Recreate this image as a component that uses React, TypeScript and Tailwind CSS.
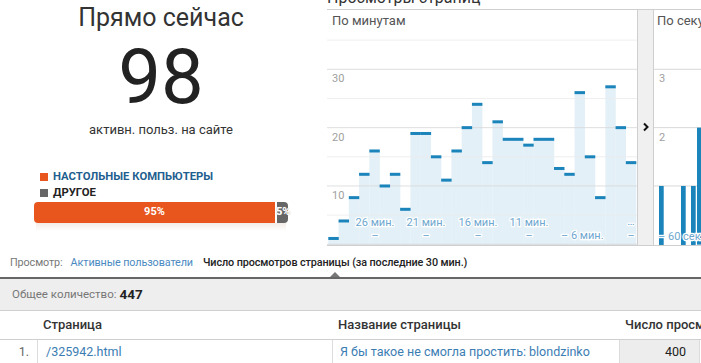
import React from "react"

const perMinute = [1, 4, 8, 12, 16, 10, 12, 6, 19, 19, 15, 11, 16, 20, 24, 14, 21, 18, 18, 17, 18, 18, 13, 12, 26, 15, 8, 27, 20, 14]

const BASE = 213.3
const UNIT = 5.833
const BAR_W = 10.26
const yOf = (v: number) => BASE - v * UNIT

const labelProps = {
    fontSize: 11,
    fill: "#6ea7cf",
    stroke: "#ffffff",
    strokeWidth: 2.5,
    paintOrder: "stroke" as const,
    fontFamily: "Roboto, sans-serif",
}

const MinutesChart = () => (
    <svg width="310" height="214" className="block">
        {perMinute.map((v, i) => (
            <rect key={"f" + i} x={1.3 + i * BAR_W} y={yOf(v)} width={BAR_W + 0.2} height={BASE - yOf(v) + 1} fill="#e3f0f7" />
        ))}
        {[0, 5, 10, 15, 20, 25, 30, 35].map(v => (
            <line key={v} x1="0" x2="310" y1={yOf(v)} y2={yOf(v)} stroke={v % 10 === 0 ? "#d8d8d8" : "#ececec"} strokeWidth="1" opacity="0.8" />
        ))}
        {perMinute.map((v, i) => (
            <rect key={"c" + i} x={1.3 + i * BAR_W} y={yOf(v) - 1.5} width={BAR_W + 0.2} height="3" fill="#1b84bb" />
        ))}
        {[["30", 30], ["20", 20], ["10", 10]].map(([t, v]) => (
            <text key={t} x="5" y={yOf(v as number) + 13} fontSize="11" fill="#a0a0a0" fontFamily="Roboto, sans-serif">{t}</text>
        ))}
        <text x="48" y="195" textAnchor="middle" {...labelProps}>26 мин.</text>
        <text x="99" y="195" textAnchor="middle" {...labelProps}>21 мин.</text>
        <text x="151" y="195" textAnchor="middle" {...labelProps}>16 мин.</text>
        <text x="202" y="195" textAnchor="middle" {...labelProps}>11 мин.</text>
        <text x="304" y="194" textAnchor="middle" {...labelProps}>…</text>
        {[48, 99, 151, 202, 304].map(x => (
            <text key={x} x={x} y="208" textAnchor="middle" {...labelProps}>–</text>
        ))}
        <text x="234" y="208" {...labelProps}>– 6 мин.</text>
    </svg>
)

const SecondsChart = () => (
    <svg width="200" height="214" className="block">
        {[1, 2, 3].map(v => (
            <line key={v} x1="0" x2="200" y1={BASE - v * 58.33} y2={BASE - v * 58.33} stroke="#d8d8d8" strokeWidth="1" />
        ))}
        {[["3", 3], ["2", 2], ["1", 1]].map(([t, v]) => (
            <text key={t} x="5" y={BASE - (v as number) * 58.33 + 13} fontSize="11" fill="#a0a0a0" fontFamily="Roboto, sans-serif">{t}</text>
        ))}
        <rect x="5" y={BASE - 58.33} width="4.7" height="59" fill="#1b84bb" />
        <rect x="27" y={BASE - 58.33} width="4.7" height="59" fill="#1b84bb" />
        <rect x="37" y={BASE - 58.33} width="4.7" height="59" fill="#1b84bb" />
        <rect x="43" y={BASE - 116.66} width="4.7" height="117" fill="#1b84bb" />
        <text x="4" y="209" {...labelProps}>– 60 сек.</text>
    </svg>
)

export default function App() {
    return (
        <div className="w-[701px] h-[363px] overflow-hidden bg-white text-[#333] font-['Roboto',sans-serif]">
            <div className="flex h-[246px]">
                <div className="w-[322px] shrink-0 flex flex-col items-center">
                    <div className="pt-[3px] text-[25px] leading-[30px] text-[#333]">Прямо сейчас</div>
                    <div className="mt-[6px] text-[76px] leading-[76px] text-[#222]">98</div>
                    <div className="mt-[7px] text-[13px] leading-[16px] text-[#333]">активн. польз. на сайте</div>
                    <div className="w-[254px] mt-[31px]">
                        <div className="pl-[6px] text-[11.3px] leading-[16px] font-bold">
                            <div className="flex items-center gap-[5px]">
                                <span className="w-[8px] h-[8px] bg-[#e8561e]" />
                                <span className="text-[#1f5f8f]">НАСТОЛЬНЫЕ КОМПЬЮТЕРЫ</span>
                            </div>
                            <div className="flex items-center gap-[5px]">
                                <span className="w-[8px] h-[8px] bg-[#666]" />
                                <span className="text-[#222]">ДРУГОЕ</span>
                            </div>
                        </div>
                        <div className="mt-[1px] flex h-[21px] text-[11px] font-bold text-white">
                            <div className="w-[241px] bg-[#e8561e] rounded-l-[4px] flex items-center justify-center">95%</div>
                            <div className="w-[2px]" />
                            <div className="w-[11px] bg-[#666] rounded-r-[4px] flex items-center whitespace-nowrap [text-shadow:0_0_1px_#999]">
                                <span className="-ml-[1px]">5%</span>
                            </div>
                        </div>
                        <div className="mx-[2px] h-[8px] bg-gradient-to-b from-[#f4ece8] to-white" />
                    </div>
                </div>
                <div className="ml-[5px] flex-1 flex flex-col">
                    <div className="h-[9px] overflow-hidden">
                        <div className="-mt-[10px] text-[16px] leading-[16px] text-[#333]">Просмотры страниц</div>
                    </div>
                    <div className="flex border-y border-[#cfcfcf]">
                        <div className="w-[310px] shrink-0">
                            <div className="h-[21px] pl-[5px] text-[13px] leading-[21px] text-[#555]">По минутам</div>
                            <MinutesChart />
                        </div>
                        <div className="w-[17px] shrink-0 bg-[#f0f0f0] border-x border-[#cfcfcf] flex justify-center pt-[112px]">
                            <svg width="6" height="10" viewBox="0 0 6 10">
                                <path d="M1 1.5 L4.5 5 L1 8.5" fill="none" stroke="#111" strokeWidth="2" />
                            </svg>
                        </div>
                        <div className="w-[200px] shrink-0">
                            <div className="h-[21px] pl-[3px] text-[13px] leading-[21px] text-[#555] whitespace-nowrap">По секундам</div>
                            <SecondsChart />
                        </div>
                    </div>
                </div>
            </div>

            <div className="h-[31px] pt-[10px] px-[10px] flex gap-[8px] text-[10.8px] leading-[14px] tracking-[-0.1px]">
                <span className="text-[#777]">Просмотр:</span>
                <span className="text-[#4a8abf]">Активные пользователи</span>
                <span className="relative ml-[2px] font-medium text-[#222]">
                    Число просмотров страницы (за последние 30 мин.)
                    <span className="absolute left-1/2 -translate-x-1/2 top-[16px] w-0 h-0 border-x-[5px] border-x-transparent border-b-[5px] border-b-[#777]" />
                </span>
            </div>

            <div className="h-[34px] border-t-2 border-b border-t-[#666] border-b-[#cfcfcf] bg-[#eeeeee] flex items-center px-[12px]">
                <span className="text-[11.5px] text-[#777]">Общее количество:</span>
                <span className="ml-[3px] text-[13.5px] font-bold text-[#222]">447</span>
            </div>

            <div className="flex h-[29px] border-b border-[#cfcfcf] items-center text-[13px] font-medium text-[#333] whitespace-nowrap">
                <div className="w-[38px] shrink-0" />
                <div className="w-[295px] shrink-0 pl-[5px]">Страница</div>
                <div className="w-[287px] shrink-0 pl-[5px]">Название страницы</div>
                <div className="w-[100px] shrink-0 pl-[5px]">Число просмотров страницы</div>
            </div>

            <div className="flex h-[24px] text-[12.5px] whitespace-nowrap">
                <div className="w-[38px] shrink-0 border-r border-[#dcdcdc] flex items-center justify-end pr-[8px] text-[#666]">1.</div>
                <div className="w-[295px] shrink-0 border-r border-[#dcdcdc] flex items-center pl-[8px] text-[#3b7db3]">/325942.html</div>
                <div className="w-[287px] shrink-0 border-r border-[#dcdcdc] flex items-center pl-[7px] text-[#3b7db3]">Я бы такое не смогла простить: blondzinko</div>
                <div className="w-[80px] shrink-0 bg-[#ededed] border-r border-[#dcdcdc] flex items-center justify-end pr-[13px] text-[#222]">400</div>
            </div>
        </div>
    )
}
